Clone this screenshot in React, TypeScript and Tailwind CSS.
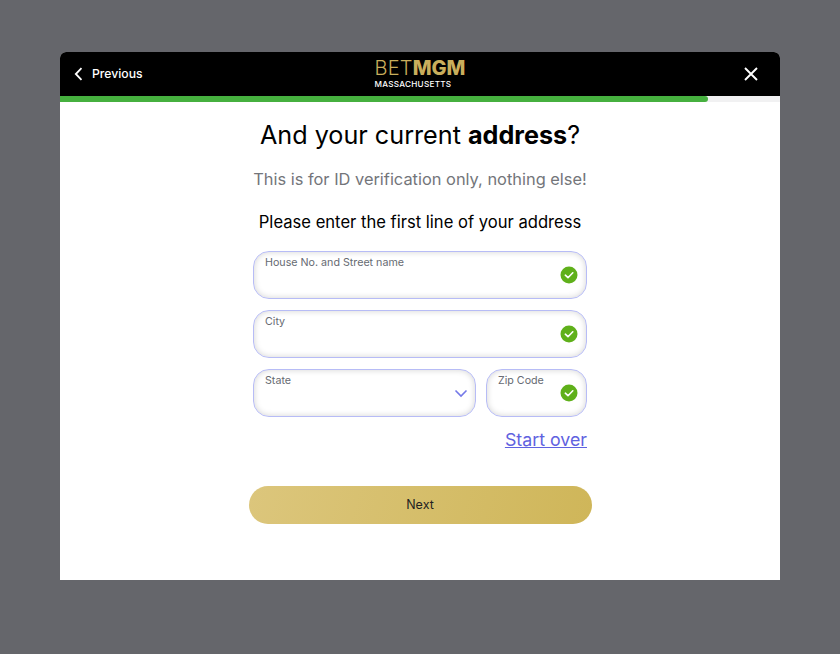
import React from "react";

const font = { fontFamily: '"Inter", "Liberation Sans", sans-serif' };

function Check() {
  return (
    <svg width="18" height="18" viewBox="0 0 18 18" className="block">
      <circle cx="9" cy="9" r="8.5" fill="#5fb01a" />
      <path d="M5.3 9.2 L8 11.7 L12.8 6.8" fill="none" stroke="#fff" strokeWidth="1.6" strokeLinecap="round" strokeLinejoin="round" />
    </svg>
  );
}

function Field({ label, className, icon }: { label: string; className: string; icon: React.ReactNode }) {
  return (
    <div className={`relative h-[48px] rounded-[16px] border-[1.5px] border-[#b7bcf6] bg-white shadow-[inset_0_0_6px_rgba(0,0,0,0.18)] ${className}`}>
      <span className="absolute left-[11px] top-[4px] text-[10.7px] leading-[14px] text-[#666a72]">{label}</span>
      <span className="absolute right-[8px] top-[14px]">{icon}</span>
    </div>
  );
}

export default function App() {
  return (
    <div style={font} className="flex h-[654px] w-[840px] flex-col items-center bg-[#65666b] pt-[52px]">
      <div className="flex h-[528px] w-[720px] flex-col overflow-hidden rounded-t-[6px] bg-white">
        <header className="flex h-[44px] shrink-0 items-center justify-between bg-black pl-[14px] pr-[22px]">
          <div className="flex w-[128px] items-center gap-[9px] pt-[1px]">
            <svg width="9" height="14" viewBox="0 0 9 14"><path d="M7.5 1.2 L1.8 7 L7.5 12.8" fill="none" stroke="#fff" strokeWidth="1.8" /></svg>
            <span className="text-[12.2px] font-medium text-white">Previous</span>
          </div>
          <div className="flex flex-col items-start">
            <div className="text-[20px] leading-[18px] text-[#c9ae5c]">
              <span className="font-light tracking-[0.2px]">BET</span><span className="font-extrabold">MGM</span>
            </div>
            <div className="mt-[3px] text-[8.2px] font-medium leading-[9px] tracking-[0.25px] text-white">MASSACHUSETTS</div>
          </div>
          <div className="flex w-[120px] justify-end">
            <svg width="14" height="14" viewBox="0 0 14 14"><path d="M1 1 L13 13 M13 1 L1 13" stroke="#fff" strokeWidth="1.9" /></svg>
          </div>
        </header>
        <div className="h-[6px] shrink-0 bg-[#f1f1f2]">
          <div className="h-full w-[648px] rounded-r-[3px] bg-[#46b03f]" />
        </div>
        <main className="flex flex-col items-center">
          <h1 className="mt-[16px] text-[25.2px] font-normal leading-[34px] text-black">
            And your current <b className="font-bold">address</b>?
          </h1>
          <p className="mt-[15px] text-[16.4px] leading-[24px] text-[#73757a]">This is for ID verification only, nothing else!</p>
          <p className="mt-[19px] text-[16.6px] leading-[24px] text-black">Please enter the first line of your address</p>
          <div className="mt-[17px] flex w-[334px] flex-col gap-[11px]">
            <Field label="House No. and Street name" className="w-full" icon={<Check />} />
            <Field label="City" className="w-full" icon={<Check />} />
            <div className="flex gap-[10px]">
              <Field
                label="State"
                className="w-[223px]"
                icon={
                  <svg width="14" height="18" viewBox="0 0 14 18" className="relative left-[1px]"><path d="M1.5 6.5 L7 12 L12.5 6.5" fill="none" stroke="#7479e8" strokeWidth="1.6" /></svg>
                }
              />
              <Field label="Zip Code" className="w-[101px]" icon={<Check />} />
            </div>
          </div>
          <div className="mt-[11px] flex w-[334px] justify-end">
            <a className="text-[17.8px] leading-[24px] text-[#5f62e0] underline">Start over</a>
          </div>
          <button className="mt-[34px] h-[38px] w-[343px] rounded-[19px] bg-[linear-gradient(105deg,#dcc67c,#cfb659)] pt-[1px] text-[12.5px] text-[#222]">
            Next
          </button>
        </main>
      </div>
    </div>
  );
}
